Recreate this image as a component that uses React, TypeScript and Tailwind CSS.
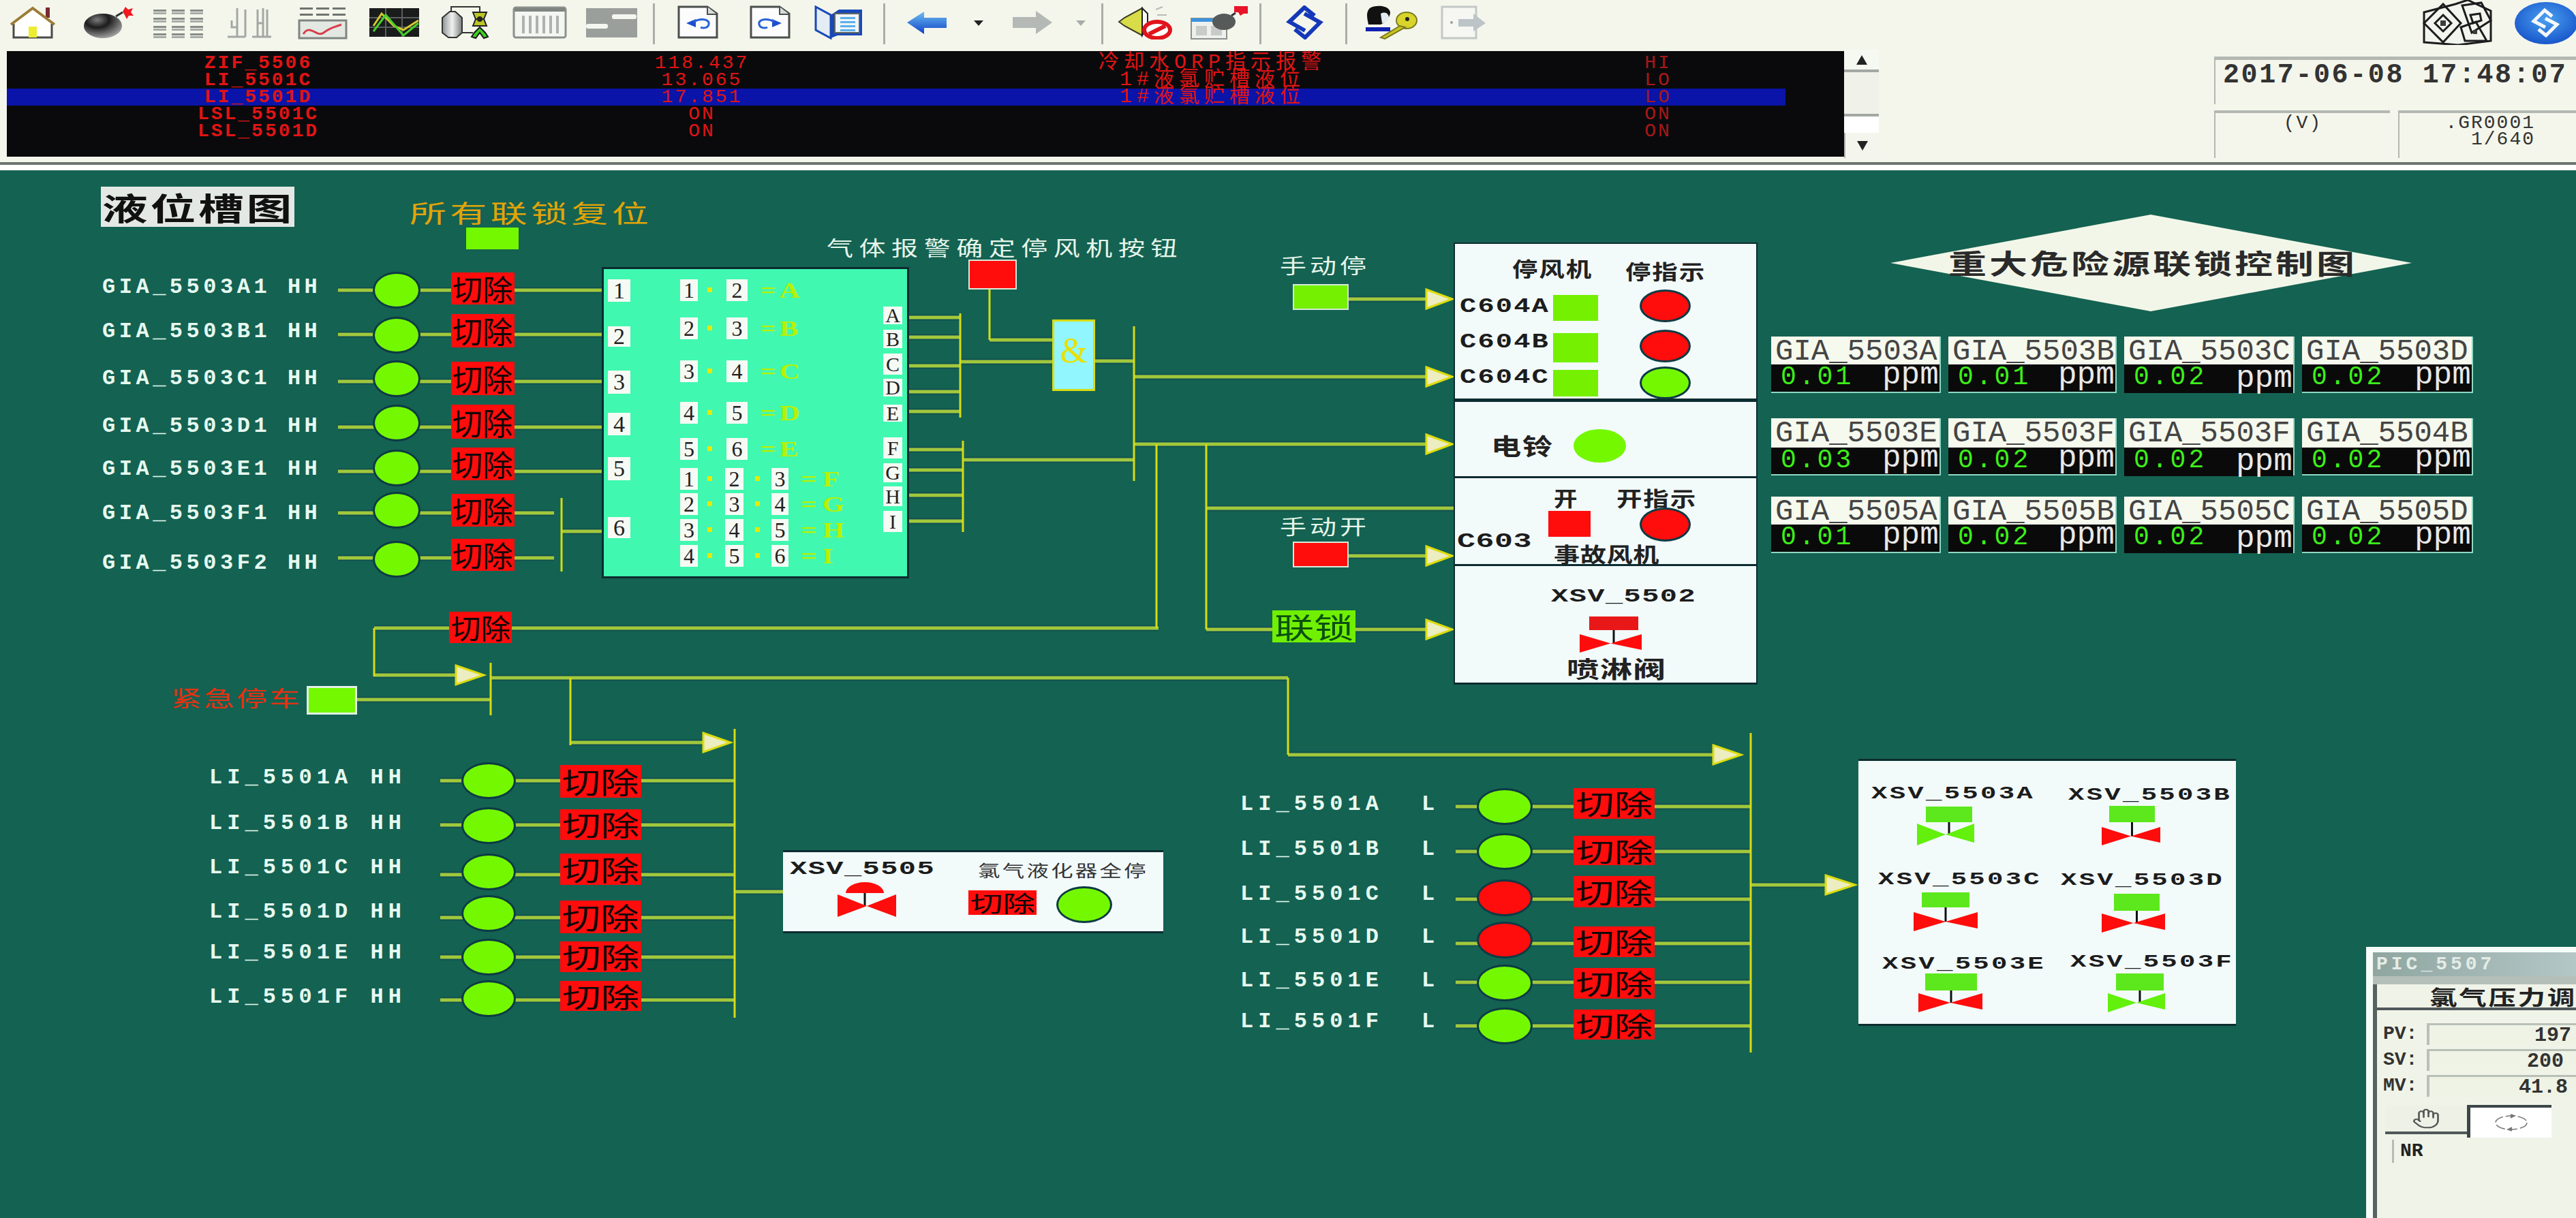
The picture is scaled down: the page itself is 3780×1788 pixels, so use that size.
import type { CSSProperties, ReactNode } from 'react';
import { Hand } from 'lucide-react';

const MONO = "font-['Liberation_Mono','Noto_Sans_CJK_SC',monospace]";
const CJK = "font-['Noto_Sans_CJK_SC',sans-serif]";
const SERIF = "font-['Liberation_Serif','Noto_Sans_CJK_SC',serif]";

const TOP = 250; // canvas starts here, all node data below is in page coordinates

const box = (x: number, y: number, w: number, h: number): CSSProperties => ({
  left: x,
  top: y - TOP,
  width: w,
  height: h,
});

/* ---------- toolbar icons ---------- */

function Ico({ w, className = '', children }: { w: number; className?: string; children: ReactNode }) {
  return (
    <svg viewBox={`0 0 ${w} 50`} width={w} height={50} className={`shrink-0 ${className}`}>
      {children}
    </svg>
  );
}

function Sep({ className = '' }: { className?: string }) {
  return <div className={`h-[60px] w-[3px] shrink-0 -mt-[3px] bg-[#a9aea6] ${className}`} />;
}

function Drop({ className = '', color = '#222' }: { className?: string; color?: string }) {
  return (
    <Ico w={16} className={className}>
      <path d="M1 22H15L8 30Z" fill={color} />
    </Ico>
  );
}

function DocIcon({ mirror, className }: { mirror?: boolean; className?: string }) {
  return (
    <Ico w={60} className={className}>
      <path d="M2 2H44L58 12V47H2Z" fill="#fbfcfb" stroke="#4a4f4c" strokeWidth="3" />
      <path d="M44 2V13H58" fill="#d8dcd8" stroke="#4a4f4c" strokeWidth="2" />
      <g transform={mirror ? 'translate(60 0) scale(-1 1)' : undefined}>
        <path d="M13 26 27 20V32Z" fill="#1d4fd0" />
        <path d="M24 24C34 18 48 20 46 28 45 33 38 34 34 32" fill="none" stroke="#2a62d8" strokeWidth="3" />
      </g>
    </Ico>
  );
}

function Toolbar() {
  return (
    <div className="flex h-[72px] shrink-0 items-start pt-[8px]">
      {/* home */}
      <Ico w={70} className="ml-[13px]">
        <path d="M7 25V47H63V25" fill="#fff" stroke="#4a4a48" strokeWidth="3" />
        <path d="M4 27 35 5 66 27Z" fill="#fff" />
        <rect x="54" y="3" width="6" height="15" fill="#7a2a30" />
        <path d="M3 28 35 4 67 28" fill="none" stroke="#9c7c36" strokeWidth="4" />
        <rect x="29" y="31" width="12" height="16" fill="#ecec30" />
      </Ico>
      {/* bomb */}
      <Ico w={77} className="ml-[37px]">
        <defs>
          <radialGradient id="bomb" cx="0.35" cy="0.25" r="0.9">
            <stop offset="0" stopColor="#7c7c7c" />
            <stop offset="0.35" stopColor="#1c1c1c" />
            <stop offset="1" stopColor="#c4c6c4" />
          </radialGradient>
        </defs>
        <ellipse cx="31" cy="30" rx="28" ry="18" fill="url(#bomb)" />
        <path d="M50 16 60 10" stroke="#333" strokeWidth="3" />
        <path d="M60 9 64 2 68 6 75 4 72 10 76 15 69 15 66 20 63 14Z" fill="#f01820" />
      </Ico>
      {/* grid */}
      <Ico w={76} className="ml-[25px]">
        {[3, 30, 57].map((x) =>
          [6, 18, 30, 41].map((y) => (
            <g key={`${x}-${y}`} fill="#878c88">
              <rect x={x} y={y} width="19" height="3" />
              <rect x={x} y={y + 4} width="19" height="3" fill="#a8aca8" />
            </g>
          )),
        )}
      </Ico>
      {/* split columns */}
      <Ico w={68} className="ml-[34px]">
        <path
          d="M2 46H28M16 4V46M8 22V32H16M28 6V46M38 46H66M46 6V46M54 4V46M46 26H54M60 6V46"
          fill="none"
          stroke="#a4a8a4"
          strokeWidth="3"
        />
      </Ico>
      {/* trend */}
      <Ico w={73} className="ml-[37px]">
        {[3, 27, 51].map((x) => (
          <g key={x} fill="#6f7470">
            <rect x={x} y="3" width="19" height="3" />
            <rect x={x} y="12" width="19" height="3" />
          </g>
        ))}
        <rect x="2" y="22" width="69" height="26" fill="#e4e8e2" stroke="#808582" strokeWidth="3" />
        <path d="M8 42C18 26 28 48 38 40 48 32 54 32 64 28" fill="none" stroke="#d8404c" strokeWidth="3" />
      </Ico>
      {/* scope */}
      <Ico w={73} className="ml-[32px]">
        <rect width="73" height="42" y="4" fill="#1a1c1c" />
        <path d="M24 4V46M48 4V46M0 18H73M0 32H73" stroke="#5a5e5c" strokeWidth="2" />
        <path d="M6 30 18 12 36 30 50 36 72 22" fill="none" stroke="#d4c830" strokeWidth="3" />
        <path d="M6 38 24 14 50 44 72 26" fill="none" stroke="#46d02c" strokeWidth="3" />
      </Ico>
      {/* tank */}
      <Ico w={72} className="ml-[33px]">
        <defs>
          <linearGradient id="tank" x1="0" x2="1" y1="0" y2="0">
            <stop offset="0" stopColor="#8c9290" />
            <stop offset="0.5" stopColor="#f0f2f0" />
            <stop offset="1" stopColor="#7a807e" />
          </linearGradient>
        </defs>
        <path d="M14 8V2H56V12M30 40H46" fill="none" stroke="#333" strokeWidth="2" />
        <path d="M1 18 12 9H20L30 18V40L22 47H10L1 40Z" fill="url(#tank)" stroke="#333" strokeWidth="2" />
        <path d="M46 10H66L62 20H50ZM50 20H62L66 30H46Z" fill="#bcc628" stroke="#222" strokeWidth="2" />
        <circle cx="56" cy="20" r="4" fill="#222" />
        <path d="M56 32 48 40 44 46 50 48 56 40 62 48 68 46 64 40Z" fill="#3cd020" stroke="#1a1a1a" strokeWidth="2" />
      </Ico>
      {/* list */}
      <Ico w={80} className="ml-[32px]">
        <rect x="2" y="3" width="76" height="44" rx="3" fill="#f4f6f2" stroke="#8b908c" strokeWidth="3" />
        <rect x="3" y="4" width="74" height="5" fill="#7f8480" />
        {[14, 24, 34, 44, 54, 64].map((x) => (
          <rect key={x} x={x} y="15" width="4" height="26" fill="#aeb2ae" />
        ))}
      </Ico>
      {/* slider */}
      <Ico w={75} className="ml-[28px]">
        <rect y="4" width="75" height="43" fill="#9a9f9c" />
        <rect x="38" y="13" width="36" height="7" rx="3" fill="#f4f6f0" />
        <rect y="27" width="32" height="7" rx="3" fill="#f4f6f0" />
      </Ico>
      <Sep className="ml-[23px]" />
      <DocIcon className="ml-[33px]" />
      <DocIcon mirror className="ml-[46px]" />
      {/* book */}
      <Ico w={75} className="ml-[35px]">
        <path d="M2 2 24 14V48L2 36Z" fill="#e4ecf4" stroke="#1848b8" strokeWidth="3" />
        <path d="M24 14 36 6H70V44H34L24 48Z" fill="#1848b8" />
        <path d="M30 12H66V40H30Z" fill="#eef4f8" stroke="#5e6460" strokeWidth="2" />
        {[17, 23, 29, 35].map((y) => (
          <rect key={y} x="38" y={y} width="22" height="3" fill="#5cb0e8" />
        ))}
      </Ico>
      <Sep className="ml-[26px]" />
      {/* back */}
      <Ico w={60} className="ml-[31px]">
        <defs>
          <linearGradient id="back" x1="0" x2="0" y1="0" y2="1">
            <stop offset="0" stopColor="#6cc0f0" />
            <stop offset="1" stopColor="#1040c8" />
          </linearGradient>
        </defs>
        <path d="M1 25 26 9V18H59V33H26V42Z" fill="url(#back)" />
      </Ico>
      <Drop className="ml-[38px]" />
      {/* forward */}
      <Ico w={61} className="ml-[40px]">
        <path d="M60 25 36 8V17H2V33H36V42Z" fill="#b4b9b6" />
      </Ico>
      <Drop className="ml-[33px]" color="#a8aca8" />
      <Sep className="ml-[22px]" />
      {/* speaker muted */}
      <Ico w={82} className="ml-[21px]">
        <path d="M2 24 10 18 36 4V44L10 30Z" fill="#d8dc48" stroke="#3a3c20" strokeWidth="2" />
        <path d="M36 4 44 12V32L36 44Z" fill="#f8f8f8" stroke="#222" strokeWidth="2" />
        <path d="M56 6 66 2M58 14H72" stroke="#b8bcb8" strokeWidth="2" />
        <ellipse cx="58" cy="36" rx="19" ry="12" fill="#fff" stroke="#e0141c" strokeWidth="6" />
        <path d="M46 42 70 30" stroke="#e0141c" strokeWidth="6" />
      </Ico>
      {/* bomb window */}
      <Ico w={85} className="ml-[25px]">
        <rect x="1" y="19" width="52" height="30" fill="#eef0ee" stroke="#8c908c" strokeWidth="2" />
        <rect x="1" y="19" width="52" height="5" fill="#3c94dc" />
        <rect x="8" y="30" width="16" height="14" fill="#c8ccc8" />
        <rect x="30" y="30" width="16" height="14" fill="#c8ccc8" />
        <ellipse cx="49" cy="24" rx="17" ry="12" fill="#565a58" />
        <path d="M60 15 66 11" stroke="#333" strokeWidth="3" />
        <path d="M64 1H84V12H78L73 15 70 10H64Z" fill="#e8142a" />
      </Ico>
      <Sep className="ml-[16px]" />
      {/* logo */}
      <Ico w={55} className="ml-[36px]">
        <path
          d="M42 15 27 3 5 24 28 37M13 35 28 47 50 25 27 12"
          fill="none"
          stroke="#1438b8"
          strokeWidth="6"
        />
      </Ico>
      <Sep className="ml-[32px]" />
      {/* user key */}
      <Ico w={78} className="ml-[25px]">
        <path d="M8 4C16-1 36-1 38 10 38 18 30 26 24 28H6C4 18 2 10 8 4Z" fill="#111" />
        <path d="M24 12C30 8 36 12 36 18 34 24 30 26 26 26Z" fill="#e4eaf2" />
        <path d="M2 32H38V38H2Z" fill="#1020b0" />
        <ellipse cx="62" cy="22" rx="15" ry="12" fill="#d8d42c" stroke="#7a7a20" strokeWidth="2" />
        <circle cx="63" cy="20" r="3" fill="#222" />
        <path d="M52 30 24 47 30 49 60 32Z" fill="#c8c420" stroke="#7a7a20" strokeWidth="2" />
      </Ico>
      {/* exit */}
      <Ico w={68} className="ml-[34px]">
        <rect x="2" y="2" width="50" height="46" fill="#f6f7f3" stroke="#c4c8c4" strokeWidth="3" />
        <circle cx="16" cy="25" r="2" fill="#9a9e9a" />
        <path d="M26 20H48V12L66 26 48 38V31H26Z" fill="#bcc4c8" />
      </Ico>
      {/* map */}
      <svg viewBox="0 0 108 66" width={108} height={66} className="-mt-[8px] ml-[1369px] shrink-0">
        <path d="M6 18 52 6 70 0 104 16 104 60 56 66 6 62Z" fill="#f2f4ee" stroke="#1c1c1c" strokeWidth="3" />
        <g fill="none" stroke="#1c1c1c" strokeWidth="3">
          <path d="M6 34 34 6 60 34 34 62ZM62 8 90 4 104 30 76 48ZM60 40 82 32 98 60H66Z" />
          <path d="M22 34 34 22 46 34 34 46ZM74 22 88 20 90 30 78 34Z" />
        </g>
        <g fill="#3c3c3c">
          <rect x="30" y="30" width="8" height="8" />
          <rect x="78" y="44" width="6" height="6" />
        </g>
      </svg>
      {/* round logo */}
      <svg viewBox="0 0 93 66" width={93} height={66} className="-mt-[6px] ml-[30px] shrink-0">
        <defs>
          <radialGradient id="roundlogo" cx="0.5" cy="0.4" r="0.65">
            <stop offset="0" stopColor="#4aa0f0" />
            <stop offset="1" stopColor="#1450c8" />
          </radialGradient>
        </defs>
        <ellipse cx="47" cy="32" rx="46" ry="31" fill="url(#roundlogo)" />
        <path d="M56 22 45 13 29 29 46 38M36 41 47 50 63 34 46 25" fill="none" stroke="#f4f8fc" strokeWidth="5" />
      </svg>
    </div>
  );
}

/* ---------- alarm strip ---------- */

const alarms = [
  { tag: 'ZIF_5506', val: '118.437', desc: '冷却水ORP指示报警', lvl: 'HI' },
  { tag: 'LI_5501C', val: '13.065', desc: '1#液氯贮槽液位', lvl: 'LO' },
  { tag: 'LI_5501D', val: '17.851', desc: '1#液氯贮槽液位', lvl: 'LO', active: true },
  { tag: 'LSL_5501C', val: 'ON', desc: '', lvl: 'ON' },
  { tag: 'LSL_5501D', val: 'ON', desc: '', lvl: 'ON' },
];

function AlarmStrip() {
  return (
    <div className="flex h-[166px] shrink-0">
      <div className="ml-[10px] mt-[3px] h-[155px] w-[2696px] bg-[#0a0a0c] pt-[5px]">
        {alarms.map((a) => (
          <div
            key={a.tag}
            className={`flex h-[25px] w-[2610px] items-center text-center text-[#e01414] leading-[25px] ${
              a.active ? 'bg-[#0a14a8]' : ''
            }`}
          >
            <div className={`w-[738px] text-[28px] font-bold tracking-[3px] ${MONO}`}>{a.tag}</div>
            <div className={`w-[564px] text-[28px] tracking-[3px] ${MONO}`}>{a.val}</div>
            <div className={`w-[934px] text-[30px] tracking-[7px] ${MONO}`}>{a.desc}</div>
            <div className={`w-[374px] text-[28px] tracking-[3px] text-[#a81818] ${MONO}`}>{a.lvl}</div>
          </div>
        ))}
      </div>
      <div className="mt-[1px] flex h-[159px] w-[51px] flex-col items-center bg-[#f6f8f2]">
        <div className="flex h-[33px] w-full items-center justify-center border-b-[4px] border-[#a4a8a4]">
          <div className="h-0 w-0 border-x-[8px] border-b-[14px] border-x-transparent border-b-[#222]" />
        </div>
        <div className="h-[61px] w-full bg-[#f0f2ea]" />
        <div className="h-[4px] w-full bg-[#a4a8a4]" />
        <div className="h-[24px] w-full bg-white" />
        <div className="flex h-[37px] w-full items-center justify-center border-l-[2px] border-[#b0b4b0] bg-[#f4f6ee]">
          <div className="h-0 w-0 border-x-[8px] border-t-[14px] border-x-transparent border-t-[#222]" />
        </div>
      </div>
      <div className={`ml-auto flex w-[531px] flex-col gap-[9px] pt-[11px] text-[#333] ${MONO}`}>
        <div className="h-[70px] border-l-[2px] border-t-[5px] border-[#b4b8b2] pl-[11px] pt-[1px] text-[40px] font-bold tracking-[2.6px] leading-[44px]">
          2017-06-08 17:48:07
        </div>
        <div className="flex h-[70px] gap-[12px] text-[28px] leading-[24px] tracking-[2px]">
          <div className="w-[258px] border-l-[2px] border-t-[4px] border-[#b4b8b2] pt-[3px] text-center">(V)</div>
          <div className="flex-1 border-l-[2px] border-t-[4px] border-[#b4b8b2] pr-[60px] pt-[3px] text-right">
            <div>.GR0001</div>
            <div>1/640</div>
          </div>
        </div>
      </div>
    </div>
  );
}

/* ---------- diagram parts ---------- */

function Txt({
  x,
  w,
  cy,
  fs,
  sx = 1,
  adv = 1,
  cls = '',
  t,
}: {
  x: number;
  w: number;
  cy: number;
  fs: number;
  sx?: number;
  adv?: number;
  cls?: string;
  t: string;
}) {
  const n = Array.from(t).length;
  const spacing = (w / n - adv * fs * sx) / sx;
  return (
    <span
      className={`absolute origin-left whitespace-nowrap ${cls}`}
      style={{
        left: x,
        top: cy - TOP - fs / 2,
        fontSize: fs,
        lineHeight: `${fs}px`,
        letterSpacing: spacing,
        transform: `scaleX(${sx})`,
      }}
    >
      {t}
    </span>
  );
}

function Lamp({ cx, cy, w, h, color = '#74f800', plain }: { cx: number; cy: number; w: number; h: number; color?: string; plain?: boolean }) {
  return (
    <div
      className={`absolute rounded-[50%] ${plain ? '' : 'border-[3px] border-[#0c3a44]'}`}
      style={{ ...box(cx - w / 2, cy - h / 2, w, h), background: color }}
    />
  );
}

function Cut({ x, x1, y, y1, t = '切除', cls = 'bg-[#ff0c0c] text-[#120808]' }: { x: number; x1: number; y: number; y1: number; t?: string; cls?: string }) {
  const fs = (y1 - y) * 0.9;
  const sx = ((x1 - x) * 0.95) / (2 * fs);
  return (
    <div className={`absolute flex items-center justify-center ${cls} ${CJK}`} style={box(x, y, x1 - x, y1 - y)}>
      <span className="whitespace-nowrap" style={{ fontSize: fs, lineHeight: 1, transform: `scaleX(${sx})` }}>
        {t}
      </span>
    </div>
  );
}

function Btn({ x, x1, y, y1, color, cls = 'border-[2px] border-[#d8e8d8]' }: { x: number; x1: number; y: number; y1: number; color: string; cls?: string }) {
  return <div className={`absolute ${cls}`} style={{ ...box(x, y, x1 - x, y1 - y), background: color }} />;
}

function Tile({ x, w, y, h, t, fs = 34 }: { x: number; w: number; y: number; h: number; t: string; fs?: number }) {
  return (
    <div
      className={`absolute flex items-center justify-center bg-[#f6faf4] text-[#222] ${SERIF}`}
      style={{ ...box(x, y, w, h), fontSize: fs, lineHeight: 1 }}
    >
      {t}
    </div>
  );
}

function Panel({ x, x1, y, y1, cls = '' }: { x: number; x1: number; y: number; y1: number; cls?: string }) {
  return <div className={`absolute bg-[#f2fafa] ${cls}`} style={box(x, y, x1 - x, y1 - y)} />;
}

function Card({ x, x1, y, y1, split, tag, val, drop }: { x: number; x1: number; y: number; y1: number; split: number; tag: string; val: string; drop?: boolean }) {
  return (
    <div className={`absolute flex flex-col border-b-[2px] border-r-[2px] border-[#8fd8c4] ${MONO}`} style={box(x, y, x1 - x, y1 - y)}>
      <div className="bg-[#f6f9ee] pl-[6px] text-[44px] leading-[44px] text-[#444]" style={{ height: split - y }}>
        {tag}
      </div>
      {/* relative: the black strip paints over the tail of the tag's underscore */}
      <div className="relative flex flex-1 justify-between bg-[#0a0a0a] pl-[14px]">
        <span className="text-[38px] leading-[38px] tracking-[4px] text-[#3cf018]">{val}</span>
        <span className={`w-[84px] text-[46px] text-[#e8e8e8] ${drop ? 'leading-[42px]' : 'leading-[32px]'}`}>ppm</span>
      </div>
    </div>
  );
}

/* ---------- data ---------- */

const hThick: [number, number, number][] = [
  [426, 496, 883], [491, 496, 883], [560, 496, 883], [627, 496, 883], [692, 496, 883],
  [753, 496, 813], [819, 496, 813], [780, 824, 883],
  [466, 1324, 1409], [495, 1324, 1409], [537, 1324, 1409], [575, 1324, 1409], [604, 1324, 1409],
  [660, 1324, 1413], [690, 1324, 1413], [727, 1324, 1413], [765, 1324, 1413],
  [531, 1409, 1544], [675, 1413, 1664], [499, 1452, 1544], [530, 1607, 1664],
  [553, 1664, 2100], [439, 1979, 2100], [652, 1664, 2100], [746, 1770, 2133],
  [924, 1770, 1867], [924, 1989, 2100], [816, 1979, 2100],
  [922, 549, 1700], [991, 549, 680], [995, 720, 1890], [1027, 524, 720], [1090, 837, 1040],
  [1146, 646, 1078], [1211, 646, 1078], [1284, 646, 1078], [1347, 646, 1078], [1405, 646, 1078], [1468, 646, 1078],
  [1309, 1078, 1149], [1108, 1890, 2520],
  [1184, 2136, 2569], [1250, 2136, 2569], [1320, 2136, 2569], [1385, 2136, 2569], [1442, 2136, 2569], [1506, 2136, 2569],
  [1299, 2569, 2685],
];

const vThin: [number, number, number][] = [
  [824, 731, 839], [1409, 460, 613], [1413, 647, 781], [1452, 425, 499], [1664, 479, 706],
  [1697, 652, 922], [1770, 652, 924], [549, 922, 993], [720, 973, 1050], [837, 995, 1094],
  [1078, 1070, 1494], [1890, 995, 1108], [2569, 1076, 1545],
];

const arrows: [number, number, number][] = [
  [2093, 2131, 439], [2093, 2131, 553], [2093, 2131, 652], [2093, 2131, 816], [2093, 2131, 924],
  [669, 710, 991], [1032, 1072, 1090], [2514, 2555, 1108], [2679, 2722, 1299],
];

const giaRows = [
  { t: 'GIA_5503A1', ty: 422, cy: 426, cut: [400, 447] },
  { t: 'GIA_5503B1', ty: 487, cy: 492, cut: [461, 510] },
  { t: 'GIA_5503C1', ty: 556, cy: 556, cut: [531, 580] },
  { t: 'GIA_5503D1', ty: 626, cy: 621, cut: [594, 644] },
  { t: 'GIA_5503E1', ty: 689, cy: 687, cut: [657, 705] },
  { t: 'GIA_5503F1', ty: 754, cy: 749, cut: [725, 773] },
  { t: 'GIA_5503F2', ty: 827, cy: 821, cut: [791, 838] },
];

const hhRows = [
  { t: 'LI_5501A', ty: 1142, cy: 1146, cut: [1123, 1171] },
  { t: 'LI_5501B', ty: 1209, cy: 1212, cut: [1188, 1233] },
  { t: 'LI_5501C', ty: 1274, cy: 1280, cut: [1253, 1299] },
  { t: 'LI_5501D', ty: 1339, cy: 1341, cut: [1322, 1370] },
  { t: 'LI_5501E', ty: 1399, cy: 1405, cut: [1382, 1427] },
  { t: 'LI_5501F', ty: 1464, cy: 1466, cut: [1440, 1484] },
];

const lRows = [
  { t: 'LI_5501A', ty: 1181, cy: 1184, cut: [1157, 1202] },
  { t: 'LI_5501B', ty: 1247, cy: 1250, cut: [1227, 1270] },
  { t: 'LI_5501C', ty: 1313, cy: 1318, cut: [1286, 1332], red: true },
  { t: 'LI_5501D', ty: 1376, cy: 1380, cut: [1360, 1405], red: true },
  { t: 'LI_5501E', ty: 1440, cy: 1443, cut: [1421, 1466] },
  { t: 'LI_5501F', ty: 1500, cy: 1506, cut: [1482, 1526] },
];

const sideNums = [
  { t: '1', y: 410, h: 33 }, { t: '2', y: 479, h: 30 }, { t: '3', y: 544, h: 34 },
  { t: '4', y: 606, h: 33 }, { t: '5', y: 671, h: 34 }, { t: '6', y: 759, h: 31 },
];

const sideLetters = [
  { t: 'A', y: 450, h: 26 }, { t: 'B', y: 484, h: 27 }, { t: 'C', y: 519, h: 31 },
  { t: 'D', y: 556, h: 26 }, { t: 'E', y: 594, h: 25 }, { t: 'F', y: 642, h: 31 },
  { t: 'G', y: 680, h: 28 }, { t: 'H', y: 714, h: 29 }, { t: 'I', y: 750, h: 31 },
];

const pairs = [
  { n: ['1', '2'], l: '=A', cy: 426 }, { n: ['2', '3'], l: '=B', cy: 482 }, { n: ['3', '4'], l: '=C', cy: 545 },
  { n: ['4', '5'], l: '=D', cy: 606 }, { n: ['5', '6'], l: '=E', cy: 659 },
];

const triples = [
  { n: ['1', '2', '3'], l: '=F', cy: 703 }, { n: ['2', '3', '4'], l: '=G', cy: 740 },
  { n: ['3', '4', '5'], l: '=H', cy: 778 }, { n: ['4', '5', '6'], l: '=I', cy: 816 },
];

const cardCols = [[2599, 2848], [2859, 3106], [3117, 3367], [3378, 3629]];
const cardRows = [
  { y: 494, y1: 577, split: 535, tags: ['GIA_5503A', 'GIA_5503B', 'GIA_5503C', 'GIA_5503D'], vals: ['0.01', '0.01', '0.02', '0.02'] },
  { y: 614, y1: 698, split: 657, tags: ['GIA_5503E', 'GIA_5503F', 'GIA_5503F', 'GIA_5504B'], vals: ['0.03', '0.02', '0.02', '0.02'] },
  { y: 729, y1: 812, split: 770, tags: ['GIA_5505A', 'GIA_5505B', 'GIA_5505C', 'GIA_5505D'], vals: ['0.01', '0.02', '0.02', '0.02'] },
];

const RED = '#ff0c0c';
const GREEN = '#62f00c';

const valves = [
  { rect: [2826, 1184, 68, 23], bow: [2813, 1209, 84, 32], color: GREEN },
  { rect: [3095, 1183, 67, 24], bow: [3084, 1214, 86, 27], color: RED },
  { rect: [2820, 1310, 70, 22], bow: [2808, 1339, 94, 28], color: RED },
  { rect: [3102, 1312, 67, 25], bow: [3084, 1341, 93, 28], color: RED },
  { rect: [2825, 1429, 76, 25], bow: [2815, 1458, 94, 28], color: RED },
  { rect: [3105, 1429, 70, 25], bow: [3093, 1458, 84, 28], color: GREEN },
  { rect: [2332, 905, 72, 20], bow: [2318, 931, 91, 27], color: RED },
];

const xsvLabels = [
  { t: 'XSV_5503A', x: 2746, cy: 1165 }, { t: 'XSV_5503B', x: 3035, cy: 1167 },
  { t: 'XSV_5503C', x: 2756, cy: 1291 }, { t: 'XSV_5503D', x: 3024, cy: 1292 },
  { t: 'XSV_5503E', x: 2762, cy: 1415 }, { t: 'XSV_5503F', x: 3038, cy: 1412 },
];

/* ---------- canvas ---------- */

function Diagram() {
  const label = `font-bold text-[#e6faf0] ${MONO}`;
  const dark = `font-bold text-[#222] ${CJK}`;
  const latin = `font-bold text-[#1c1c1c] ${MONO}`;
  const eq = `font-bold text-[#b8f000] ${SERIF}`;
  return (
    <div className="relative flex-1 overflow-hidden bg-[#146252]">
      <svg viewBox={`0 ${TOP} 3780 1538`} className="absolute left-0 top-0 h-[1538px] w-[3780px]">
        {/* halo under the thick runs */}
        {hThick.map(([y, a, b]) => (
          <line key={`h${y}-${a}`} x1={a} x2={b} y1={y} y2={y} stroke="#0e4650" strokeWidth="9" opacity="0.6" />
        ))}
        {hThick.map(([y, a, b]) => (
          <line key={`w${y}-${a}`} x1={a} x2={b} y1={y} y2={y} stroke="#a2c83c" strokeWidth="5" />
        ))}
        {vThin.map(([x, a, b]) => (
          <line key={`v${x}-${a}`} x1={x} x2={x} y1={a} y2={b} stroke="#d6dc14" strokeWidth="3" />
        ))}
        {arrows.map(([a, b, y]) => (
          <polygon key={`a${a}-${y}`} points={`${a},${y - 14} ${b},${y} ${a},${y + 14}`} fill="#ecedc0" stroke="#dcdc10" strokeWidth="3" />
        ))}
        <polygon points="2774,386 3156,315 3539,386 3156,457" fill="#f2f6e8" />
      </svg>

      {/* top-left */}
      <div className="absolute bg-[#e4e8e4]" style={box(148, 274, 284, 59)} />
      <Txt x={150} w={282} cy={303} fs={46} sx={1.45} cls={`font-bold text-[#111] ${CJK}`} t="液位槽图" />
      <Txt x={601} w={356} cy={311} fs={36} sx={1.5} cls={`text-[#e2a408] ${CJK}`} t="所有联锁复位" />
      <Btn x={684} x1={761} y={334} y1={366} color="#74f800" cls="" />

      {/* GIA rows */}
      {giaRows.map((r) => (
        <div key={r.t}>
          <Txt x={150} w={346} cy={r.ty} fs={32} adv={0.6} cls={label} t={`${r.t}  HH`} />
          <Lamp cx={582} cy={r.cy} w={70} h={54} />
          <Cut x={662} x1={755} y={r.cut[0]} y1={r.cut[1]} />
        </div>
      ))}

      {/* logic box */}
      <div className="absolute border-[3px] border-[#0c2c30] bg-[#40f8b0]" style={box(883, 392, 451, 457)} />
      {sideNums.map((n) => (
        <Tile key={n.t} x={892} w={33} y={n.y} h={n.h} t={n.t} />
      ))}
      {sideLetters.map((n) => (
        <Tile key={n.t} x={1296} w={28} y={n.y} h={n.h} t={n.t} fs={30} />
      ))}
      {pairs.map((p) => (
        <div key={p.l}>
          <Tile x={998} w={26} y={p.cy - 16} h={32} t={p.n[0]} fs={32} />
          <div className="absolute bg-[#e8e800]" style={box(1038, p.cy - 4, 7, 7)} />
          <Tile x={1066} w={31} y={p.cy - 16} h={32} t={p.n[1]} fs={32} />
          <Txt x={1115} w={60} cy={p.cy} fs={32} sx={1.3} adv={0.6} cls={eq} t={p.l} />
        </div>
      ))}
      {triples.map((p) => (
        <div key={p.l}>
          <Tile x={998} w={26} y={p.cy - 16} h={32} t={p.n[0]} fs={32} />
          <div className="absolute bg-[#e8e800]" style={box(1038, p.cy - 4, 7, 7)} />
          <Tile x={1064} w={27} y={p.cy - 16} h={32} t={p.n[1]} fs={32} />
          <div className="absolute bg-[#e8e800]" style={box(1108, p.cy - 4, 7, 7)} />
          <Tile x={1132} w={25} y={p.cy - 16} h={32} t={p.n[2]} fs={32} />
          <Txt x={1175} w={66} cy={p.cy} fs={32} sx={1.3} adv={0.6} cls={eq} t={p.l} />
        </div>
      ))}

      {/* gate */}
      <Txt x={1213} w={523} cy={362} fs={30} sx={1.3} cls={`text-[#e6f6ea] ${CJK}`} t="气体报警确定停风机按钮" />
      <Btn x={1421} x1={1492} y={381} y1={425} color="#ff0c0c" />
      <div className={`absolute flex items-center justify-center border-[3px] border-[#d8dc14] bg-[#92f6ff] pb-[14px] text-[52px] text-[#e8e000] ${SERIF}`} style={box(1544, 469, 63, 105)}>
        &amp;
      </div>

      <Txt x={1878} w={132} cy={388} fs={30} sx={1.3} cls={`text-[#e6f6ea] ${CJK}`} t="手动停" />
      <Btn x={1897} x1={1979} y={417} y1={455} color="#74f000" />
      <Txt x={1878} w={132} cy={771} fs={30} sx={1.3} cls={`text-[#e6f6ea] ${CJK}`} t="手动开" />
      <Btn x={1897} x1={1979} y={795} y1={833} color="#ff0c0c" />
      <Cut x={1867} x1={1989} y={896} y1={943} t="联锁" cls="bg-[#70f000] text-[#0a5010]" />

      {/* fan panels */}
      <Panel x={2133} x1={2579} y={356} y1={587} cls="border-[2px] border-[#0c2c30]" />
      <Panel x={2133} x1={2579} y={587} y1={699} cls="border-x-[2px] border-t-[3px] border-[#0c2c30]" />
      <Panel x={2133} x1={2579} y={699} y1={828} cls="border-x-[2px] border-t-[3px] border-[#0c2c30]" />
      <Panel x={2133} x1={2579} y={828} y1={1005} cls="border-x-[2px] border-y-[3px] border-[#0c2c30]" />

      <Txt x={2219} w={118} cy={393} fs={30} sx={1.25} cls={dark} t="停风机" />
      <Txt x={2385} w={118} cy={397} fs={30} sx={1.25} cls={dark} t="停指示" />
      {[
        { t: 'C604A', cy: 450, sq: [433, 471], lampY: 449, color: '#ff0c0c' },
        { t: 'C604B', cy: 502, sq: [489, 532], lampY: 508, color: '#ff0c0c' },
        { t: 'C604C', cy: 554, sq: [543, 582], lampY: 562, color: '#74f800' },
      ].map((r) => (
        <div key={r.t}>
          <Txt x={2142} w={132} cy={r.cy} fs={30} sx={1.35} adv={0.6} cls={latin} t={r.t} />
          <Btn x={2279} x1={2345} y={r.sq[0]} y1={r.sq[1]} color="#74f000" cls="" />
          <Lamp cx={2443} cy={r.lampY} w={75} h={48} color={r.color} />
        </div>
      ))}
      <Txt x={2188} w={92} cy={654} fs={34} sx={1.3} cls={dark} t="电铃" />
      <Lamp cx={2347} cy={654} w={77} h={49} plain />
      <Txt x={2280} w={36} cy={730} fs={30} sx={1.15} cls={dark} t="开" />
      <Txt x={2372} w={118} cy={730} fs={30} sx={1.25} cls={dark} t="开指示" />
      <Btn x={2272} x1={2334} y={750} y1={788} color="#ff0c0c" cls="" />
      <Lamp cx={2443} cy={770} w={75} h={50} color="#ff0c0c" />
      <Txt x={2138} w={110} cy={795} fs={30} sx={1.5} adv={0.6} cls={latin} t="C603" />
      <Txt x={2280} w={155} cy={812} fs={30} sx={1.27} cls={dark} t="事故风机" />
      <Txt x={2276} w={213} cy={876} fs={28} sx={1.5} adv={0.6} cls={latin} t="XSV_5502" />
      <Txt x={2299} w={146} cy={981} fs={34} sx={1.4} cls={dark} t="喷淋阀" />

      {/* title + ppm cards */}
      <Txt x={2859} w={600} cy={385} fs={40} sx={1.4} cls={`font-bold text-[#2a2a2a] ${CJK}`} t="重大危险源联锁控制图" />
      {cardRows.map((row) =>
        row.tags.map((tag, i) => (
          <Card
            key={`${row.y}-${i}`}
            x={cardCols[i][0]}
            x1={cardCols[i][1]}
            y={row.y}
            y1={row.y1}
            split={row.split}
            tag={tag}
            val={row.vals[i]}
            drop={i === 2}
          />
        )),
      )}

      {/* interlock trip */}
      <Cut x={659} x1={751} y={898} y1={944} />
      <Txt x={251} w={192} cy={1023} fs={32} sx={1.4} cls={`text-[#e83010] ${CJK}`} t="紧急停车" />
      <Btn x={450} x1={524} y={1007} y1={1049} color="#74f800" cls="border-[3px] border-[#e4f0e4]" />

      {/* HH block */}
      {hhRows.map((r) => (
        <div key={r.t}>
          <Txt x={307} w={289} cy={r.ty} fs={32} adv={0.6} cls={label} t={`${r.t} HH`} />
          <Lamp cx={717} cy={r.cy} w={80} h={54} />
          <Cut x={822} x1={941} y={r.cut[0]} y1={r.cut[1]} />
        </div>
      ))}
      <Panel x={1149} x1={1707} y={1248} y1={1370} cls="border-y-[3px] border-[#0c2c30]" />
      <Txt x={1159} w={213} cy={1276} fs={28} sx={1.5} adv={0.6} cls={latin} t="XSV_5505" />
      <Txt x={1435} w={250} cy={1277} fs={24} sx={1.35} cls={`text-[#333] ${CJK}`} t="氯气液化器全停" />
      <Cut x={1421} x1={1521} y={1307} y1={1343} />
      <Lamp cx={1591} cy={1328} w={82} h={54} />

      {/* L block */}
      {lRows.map((r) => (
        <div key={r.t}>
          <Txt x={1820} w={210} cy={r.ty} fs={32} adv={0.6} cls={label} t={r.t} />
          <Txt x={2086} w={24} cy={r.ty} fs={32} adv={0.6} cls={label} t="L" />
          <Lamp cx={2208} cy={r.cy} w={82} h={54} color={r.red ? '#ff0c0c' : '#74f800'} />
          <Cut x={2309} x1={2428} y={r.cut[0]} y1={r.cut[1]} />
        </div>
      ))}
      <Panel x={2727} x1={3281} y={1114} y1={1506} cls="border-y-[3px] border-[#0c2c30]" />
      {xsvLabels.map((l) => (
        <Txt key={l.t} x={l.x} w={240} cy={l.cy} fs={26} sx={1.5} adv={0.6} cls={latin} t={l.t} />
      ))}

      {/* valves drawn above the panels */}
      <svg viewBox={`0 ${TOP} 3780 1538`} className="absolute left-0 top-0 h-[1538px] w-[3780px]">
        {valves.map(({ rect: [x, y, w, h], bow: [bx, by, bw, bh], color }) => (
          <g key={`${x}-${y}`}>
            <rect x={x} y={y} width={w} height={h} fill={color === RED && y === 905 ? '#e81818' : '#5ce81c'} />
            <line x1={x + w / 2} x2={x + w / 2} y1={y + h} y2={by + bh / 2} stroke="#111" strokeWidth="3" />
            <polygon
              points={`${bx},${by} ${bx + bw / 2},${by + bh / 2} ${bx + bw},${by} ${bx + bw},${by + bh - 4} ${bx + bw / 2},${by + bh / 2} ${bx},${by + bh}`}
              fill={color}
            />
          </g>
        ))}
        <path d="M1241 1311A28 16 0 0 1 1297 1311Z" fill="#ff0c0c" />
        <line x1="1269" x2="1269" y1="1311" y2="1330" stroke="#111" strokeWidth="3" />
        <polygon points="1229,1313 1272,1330 1315,1313 1315,1346 1272,1330 1229,1346" fill="#ff0c0c" />
      </svg>

      <PidWindow />
    </div>
  );
}

/* ---------- controller faceplate ---------- */

function PidRow({ k, v, indent }: { k: string; v: string; indent: string }) {
  return (
    <div className="flex h-[32px] items-center">
      <div className={`w-[73px] pl-[9px] text-[28px] font-bold text-[#333] ${MONO}`}>{k}</div>
      <div className={`h-full flex-1 border-l-[4px] border-t-[3px] border-[#b8c0b8] bg-[#eff3e6] text-[30px] font-bold leading-[30px] text-[#333] ${indent} ${MONO}`}>
        {v}
      </div>
    </div>
  );
}

function PidWindow() {
  return (
    <div className="absolute left-[3472px] top-[1140px] h-[398px] w-[460px] bg-[#f6fcf8] pl-[10px] pt-[8px]">
      <div className="flex h-[35px] items-center bg-gradient-to-r from-[#8fa6a0] to-[#c8d8dc] pl-[5px]">
        <span className={`text-[28px] font-bold tracking-[5px] text-[#e4ece6] ${MONO}`}>PIC_5507</span>
      </div>
      <div className="h-[12px] bg-[#b4bfb8]" />
      <div className="h-full border-l-[6px] border-[#58625e] bg-[#f0f4e8]">
        <div className="h-[38px] border-b-[4px] border-[#50585a] pl-[77px]">
          <span className={`inline-block origin-left scale-x-[1.35] text-[30px] font-bold leading-[34px] tracking-[2px] text-[#222] ${CJK}`}>
            氯气压力调节
          </span>
        </div>
        <div className="flex flex-col gap-[6px] pt-[19px]">
          <PidRow k="PV:" v="197" indent="pl-[154px]" />
          <PidRow k="SV:" v="200" indent="pl-[143px]" />
          <PidRow k="MV:" v="41.8" indent="pl-[131px]" />
        </div>
        <div className="mt-[12px] flex h-[48px] pl-[12px]">
          <div className="flex h-[43px] w-[120px] items-center justify-center border-b-[4px] border-[#50585a] bg-[#eef1e6]">
            <Hand className="h-[32px] w-[42px] text-[#555]" strokeWidth={1.5} preserveAspectRatio="none" />
          </div>
          <div className="flex w-[124px] items-center justify-center border-l-[5px] border-t-[4px] border-[#3c4648] bg-white">
            <svg viewBox="0 0 50 26" width={50} height={26} fill="none" stroke="#777" strokeWidth="1.5">
              <ellipse cx="25" cy="13" rx="23" ry="10" strokeDasharray="14 4" />
              <path d="M24 1 30 3 24 6M26 20 20 23 26 25" fill="#777" />
            </svg>
          </div>
        </div>
        <div className={`ml-[22px] mt-[3px] flex h-[34px] items-center border-l-[3px] border-[#b4bcb4] pl-[9px] text-[28px] font-bold text-[#222] ${MONO}`}>
          NR
        </div>
      </div>
    </div>
  );
}

export default function App() {
  return (
    <div className="flex h-[1788px] w-[3780px] flex-col overflow-hidden bg-[#f4f6ec]">
      <Toolbar />
      <AlarmStrip />
      <div className="h-[4px] shrink-0 bg-[#6c7470]" />
      <div className="h-[8px] shrink-0 bg-white" />
      <Diagram />
    </div>
  );
}
